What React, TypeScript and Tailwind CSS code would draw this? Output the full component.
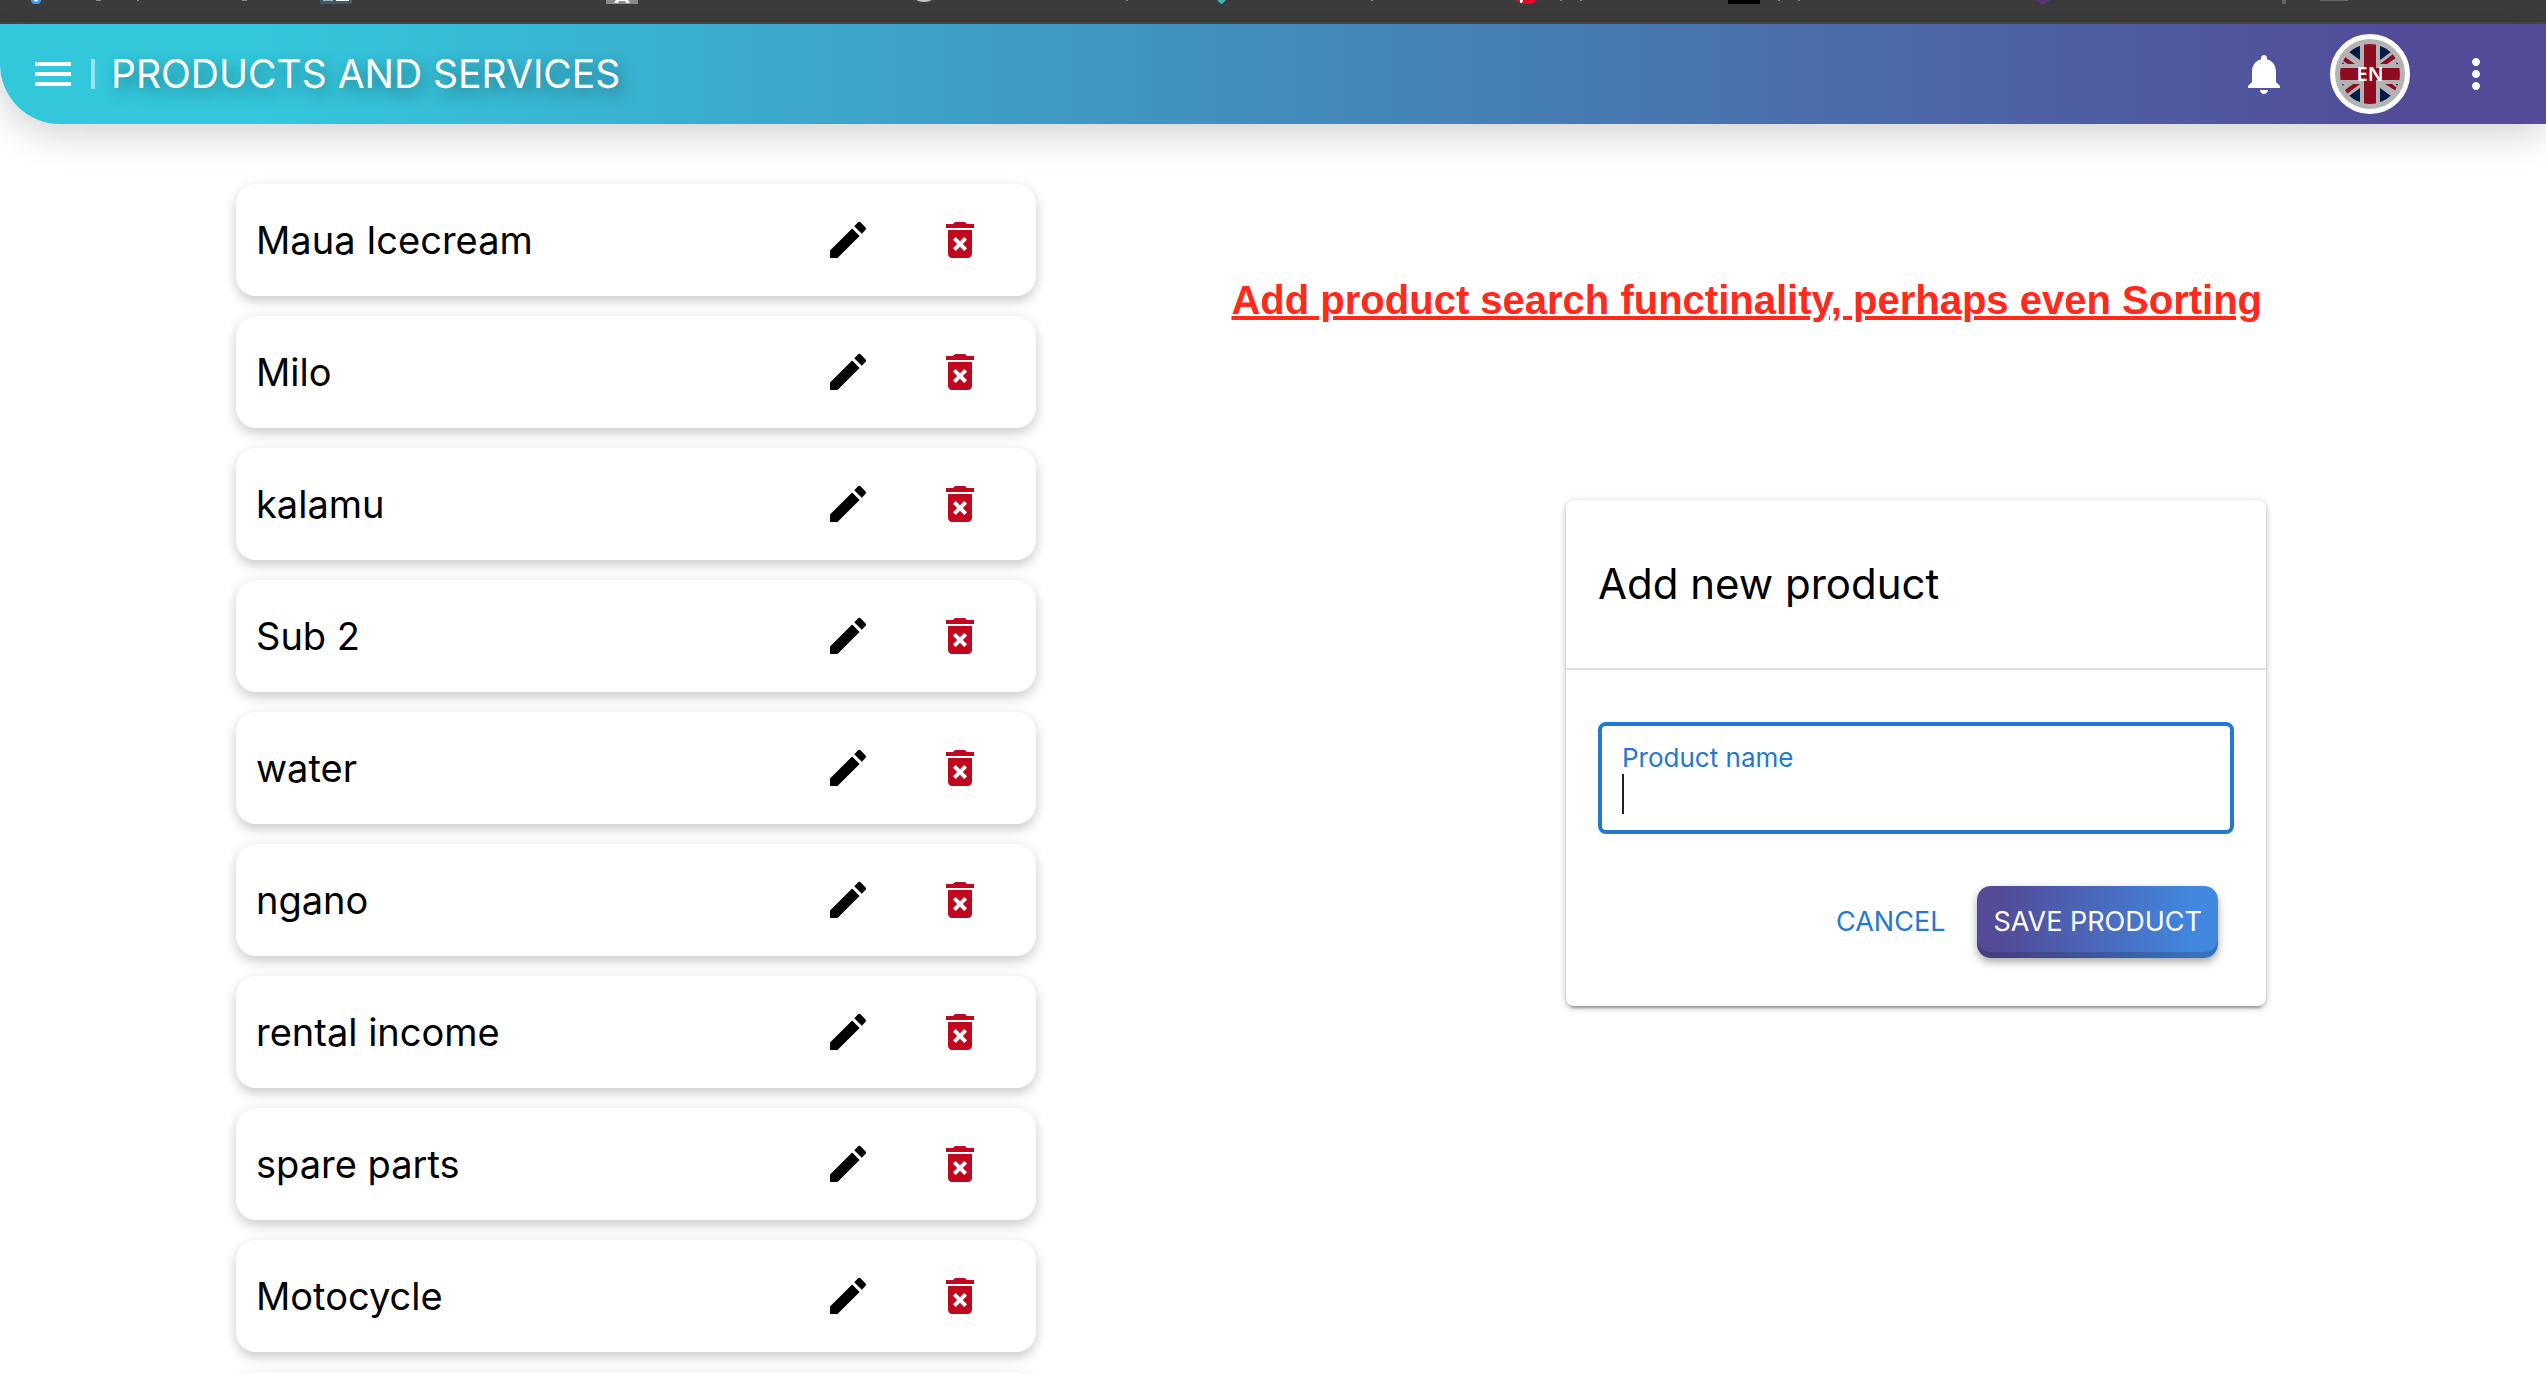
import { useState } from "react";

const products = [
  "Maua Icecream",
  "Milo",
  "kalamu",
  "Sub 2",
  "water",
  "ngano",
  "rental income",
  "spare parts",
  "Motocycle",
];

function Icon({ d }: { d: string }) {
  return (
    <svg viewBox="0 0 24 24" className="size-12" fill="currentColor" aria-hidden="true">
      <path d={d} />
    </svg>
  );
}

const MENU = "M3 18h18v-2H3v2zm0-5h18v-2H3v2zm0-7v2h18V6H3z";
const BELL =
  "M12 22c1.1 0 2-.9 2-2h-4c0 1.1.89 2 2 2zm6-6v-5c0-3.07-1.64-5.64-4.5-6.32V4c0-.83-.67-1.5-1.5-1.5s-1.5.67-1.5 1.5v.68C7.63 5.36 6 7.92 6 11v5l-2 2v1h16v-1l-2-2z";
const MORE =
  "M12 8c1.1 0 2-.9 2-2s-.9-2-2-2-2 .9-2 2 .9 2 2 2zm0 2c-1.1 0-2 .9-2 2s.9 2 2 2 2-.9 2-2-.9-2-2-2zm0 6c-1.1 0-2 .9-2 2s.9 2 2 2 2-.9 2-2-.9-2-2-2z";
const PENCIL =
  "M3 17.25V21h3.75L17.81 9.94l-3.75-3.75L3 17.25zM20.71 7.04c.39-.39.39-1.02 0-1.41l-2.34-2.34a.9959.9959 0 0 0-1.41 0l-1.83 1.83 3.75 3.75 1.83-1.83z";
const TRASH =
  "M6 19c0 1.1.9 2 2 2h8c1.1 0 2-.9 2-2V7H6v12zm2.46-7.12 1.41-1.41L12 12.59l2.12-2.12 1.41 1.41L13.41 14l2.12 2.12-1.41 1.41L12 15.41l-2.12 2.12-1.41-1.41L10.59 14l-2.13-2.12zM15.5 4l-1-1h-5l-1 1H5v2h14V4z";

function BrowserStrip() {
  return (
    <div className="h-6 shrink-0 overflow-hidden border-b-2 border-[#484848] bg-[#3c3c3c]">
      <svg className="block h-1 w-full" viewBox="0 0 2546 4" preserveAspectRatio="xMinYMin slice" aria-hidden="true">
        <circle cx="36" cy="-1" r="4" fill="#fff" stroke="#3b9cf5" strokeWidth="3" />
        <path
          fill="#8a8a8a"
          d="M96 0h5v1h-5zM137 0h2v1h-2zM242 0h5v1h-5zM1126 0h2v1h-2zM1371 0h2v1h-2zM1560 0h2v1h-2zM1580 0h2v1h-2zM1778 0h2v1h-2zM1798 0h2v1h-2z"
        />
        <path d="M320 0h32v4h-32z" fill="#455a66" />
        <path d="M323 0h10v1h-10z" fill="#9fb3bd" />
        <path d="M336 0h13v1h-13z" fill="#fff" />
        <path d="M606 0h32v4h-32z" fill="#8c8c8c" />
        <path d="M616 0h12l2 3h-4l-1-2h-6l-1 2h-4z" fill="#fff" />
        <ellipse cx="924" cy="-1" rx="8" ry="3" fill="#c3c8d0" />
        <path d="M1217 0h9l-4 4h-1z" fill="#3fb8af" />
        <path d="M1516 0h21q-3 4-10 4t-11-4z" fill="#ea0a2a" />
        <path d="M1520 0h3l-1 3h-2z" fill="#fff" />
        <path d="M1728 0h32v4h-32z" fill="#000" />
        <path d="M2035 0h16l-7 4h-2z" fill="#5a3478" />
        <path d="M2282 0h4v4h-4zM2320 0h28v1h-28z" fill="#666" />
      </svg>
    </div>
  );
}

function FlagBadge() {
  return (
    <button
      type="button"
      aria-label="Language: English"
      className="relative flex size-20 items-center justify-center rounded-full border-[5px] border-white bg-[#b3b3b3]"
    >
      <svg viewBox="0 0 60 60" className="size-[60px]" aria-hidden="true">
        <defs>
          <clipPath id="flag-round">
            <circle cx="30" cy="30" r="30" />
          </clipPath>
        </defs>
        <g clipPath="url(#flag-round)">
          <path
            fill="#001b47"
            d="M20 2v14L9 8q5-5 11-6zM40 2v14l11-8q-5-5-11-6zM20 58V44L9 52q5 5 11 6zM40 58V44l11 8q-5 5-11 6zM3 18l1 2H2zM57 18l1 2h-2zM3 42l1-2H2zM57 42l1-2h-2z"
          />
          <path
            fill="#8d0c22"
            d="M24 0h12v60H24zM0 24h60v12H0zM5 13l10 7H8l-5-3zM53 10l3 4-9 6h-7zM5 46l2 4 13-10h-7zM45 40h7l5 4-1 3z"
          />
        </g>
      </svg>
      <span className="absolute font-[Noto_Sans] text-xl leading-5 font-semibold text-white">EN</span>
    </button>
  );
}

function Header() {
  return (
    <header className="flex h-[100px] shrink-0 items-center rounded-bl-[60px] bg-linear-to-r/srgb from-[#33c7dc] from-10% to-[#534b98] to-95% pr-[46px] pl-[29px] text-white shadow-[0_8px_40px_rgba(0,0,0,0.2)]">
      <button type="button" aria-label="Open menu">
        <Icon d={MENU} />
      </button>
      <span className="ml-3.5 h-[30px] w-1 bg-white/50" />
      <h1 className="ml-4 text-[39px] leading-[60px] whitespace-nowrap [text-shadow:4px_6px_16px_rgba(0,0,0,0.4)]">
        PRODUCTS AND SERVICES
      </h1>
      <div className="ml-auto flex items-center gap-[42px]">
        <button type="button" aria-label="Notifications">
          <Icon d={BELL} />
        </button>
        <FlagBadge />
        <button type="button" aria-label="More options">
          <Icon d={MORE} />
        </button>
      </div>
    </header>
  );
}

const cardClass =
  "flex h-28 shrink-0 items-center rounded-[20px] bg-white pr-[52px] pl-5 shadow-[0_6px_12px_rgba(0,0,0,0.17),0_0_14px_rgba(0,0,0,0.05)]";

function ProductList() {
  return (
    <ul className="flex flex-col gap-5">
      {products.map((name) => (
        <li key={name} className={cardClass}>
          <span className="grow text-[38px] leading-[56px]">{name}</span>
          <div className="flex gap-16">
            <button type="button" aria-label={`Edit ${name}`} className="text-black">
              <Icon d={PENCIL} />
            </button>
            <button type="button" aria-label={`Delete ${name}`} className="text-[#c1071e]">
              <Icon d={TRASH} />
            </button>
          </div>
        </li>
      ))}
      <li className={cardClass} />
    </ul>
  );
}

function AddProductForm() {
  const [name, setName] = useState("");
  return (
    <form
      onSubmit={(e) => e.preventDefault()}
      className="mt-[170px] w-full max-w-[700px] rounded-lg bg-white shadow-[0_6px_2px_-4px_rgba(0,0,0,0.2),0_2px_4px_rgba(0,0,0,0.2),0_2px_10px_rgba(0,0,0,0.14)]"
    >
      <h2 className="border-b-2 border-[#e0e0e0] px-8 py-[54px] text-[42px] leading-[60px]">Add new product</h2>
      <div className="px-8 pt-[52px] pb-12">
        <div className="relative h-28 rounded-lg border-4 border-[#2378cf] px-5 pt-4">
          <label htmlFor="product-name" className="block text-[26px] leading-8 text-[#2378cf]">
            Product name
          </label>
          <input
            id="product-name"
            value={name}
            onChange={(e) => setName(e.target.value)}
            className="block h-10 w-full text-[32px] caret-transparent outline-none"
          />
          {name === "" && <span className="absolute top-12 left-5 h-10 w-0.5 bg-[#222]" />}
        </div>
        <div className="mt-[52px] flex items-center justify-end gap-8 pr-4">
          <button type="button" className="text-[27px] leading-[72px] text-[#2378cf]">
            CANCEL
          </button>
          <button
            type="submit"
            className="h-[72px] rounded-[14px] bg-linear-to-r/srgb from-[#534b98] from-10% to-[#4287e0] to-90% px-4 text-[27px] text-white shadow-[inset_0_-6px_0_rgba(0,0,0,0.16),0_4px_8px_rgba(0,0,0,0.35)]"
          >
            SAVE PRODUCT
          </button>
        </div>
      </div>
    </form>
  );
}

export default function App() {
  return (
    <div className="flex h-screen flex-col overflow-hidden bg-white font-[Inter,sans-serif] text-black">
      <BrowserStrip />
      <Header />
      <main className="grid grid-cols-[800fr_1230fr] pt-[60px] pr-[280px] pl-[236px]">
        <ProductList />
        <section className="flex flex-col items-end pt-[86px]">
          <p className="mr-1 font-['Liberation_Sans',Arial,sans-serif] text-[40px] leading-[60px] font-bold whitespace-nowrap text-[#ff2a1c] underline">
            Add product search functinality, perhaps even Sorting
          </p>
          <AddProductForm />
        </section>
      </main>
    </div>
  );
}
